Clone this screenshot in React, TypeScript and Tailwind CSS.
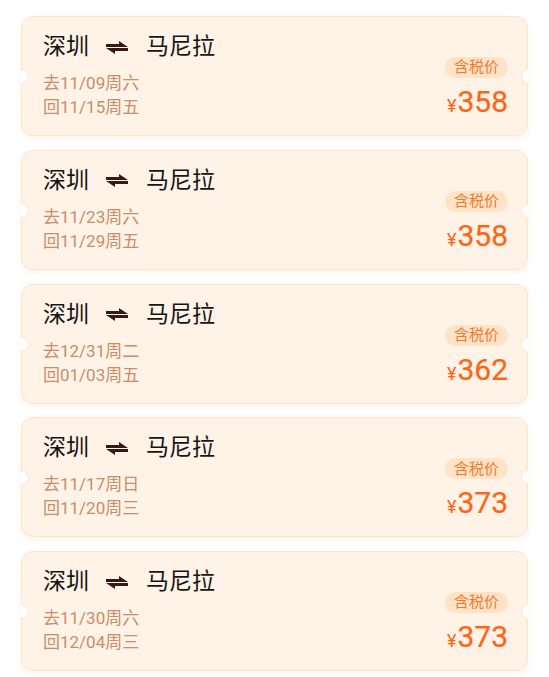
import React from "react";

type Trip = { go: string; back: string; price: number };

const trips: Trip[] = [
  { go: "去11/09周六", back: "回11/15周五", price: 358 },
  { go: "去11/23周六", back: "回11/29周五", price: 358 },
  { go: "去12/31周二", back: "回01/03周五", price: 362 },
  { go: "去11/17周日", back: "回11/20周三", price: 373 },
  { go: "去11/30周六", back: "回12/04周三", price: 373 },
];

const SwapArrow: React.FC = () => (
  <svg width="22" height="13" viewBox="0 0 22 13" fill="#3b1712">
    <path d="M0 3H13V0L22 5.9H0Z" />
    <path d="M22 10H9V13L0 7.1H22Z" />
  </svg>
);

const TripCard: React.FC<{ trip: Trip }> = ({ trip }) => (
  <div className="relative h-[120px] rounded-[12px] border border-[#ffe4c9] bg-[#fff2e6] shadow-[0_2px_6px_rgba(240,150,90,0.12)]">
    {/* ticket notches, only the inner half shows */}
    <div className="absolute left-[-8.5px] top-[52px] h-[15px] w-[15px] rounded-full border border-[#fde3cc] bg-white [clip-path:inset(0_0_0_50%)]" />
    <div className="absolute right-[-8.5px] top-[52px] h-[15px] w-[15px] rounded-full border border-[#fde3cc] bg-white [clip-path:inset(0_50%_0_0)]" />

    <div className="flex h-full justify-between pl-[21px] pr-[19px]">
      <div className="flex flex-col pt-[14px]">
        <div className="flex items-center text-[23px] leading-[32px] text-[#151515]">
          <span>深圳</span>
          <span className="ml-[17px] mr-[18px] flex items-center">
            <SwapArrow />
          </span>
          <span>马尼拉</span>
        </div>
        <div className="mt-[8px] text-[17px] leading-[24px] text-[#c98d68]">
          <div>{trip.go}</div>
          <div>{trip.back}</div>
        </div>
      </div>

      <div className="flex flex-col items-end pt-[40px]">
        <div className="flex h-[21px] items-center rounded-full bg-[#ffe3c6] px-[9px] text-[15px] text-[#f2782d]">
          含税价
        </div>
        <div className="mt-[9px] flex items-baseline leading-[30px] text-[#ff6414]">
          <span className="mr-[1px] text-[18px]">¥</span>
          <span className="text-[30px] [-webkit-text-stroke:0.2px_#ff6414]">{trip.price}</span>
        </div>
      </div>
    </div>
  </div>
);

export default function App() {
  return (
    <div
      className="min-h-[677px] bg-white px-[21px] pt-[16px]"
      style={{ fontFamily: 'Roboto, "Noto Sans CJK SC", sans-serif' }}
    >
      <div className="flex flex-col gap-[13.75px]">
        {trips.map((t, i) => (
          <TripCard key={i} trip={t} />
        ))}
      </div>
    </div>
  );
}
